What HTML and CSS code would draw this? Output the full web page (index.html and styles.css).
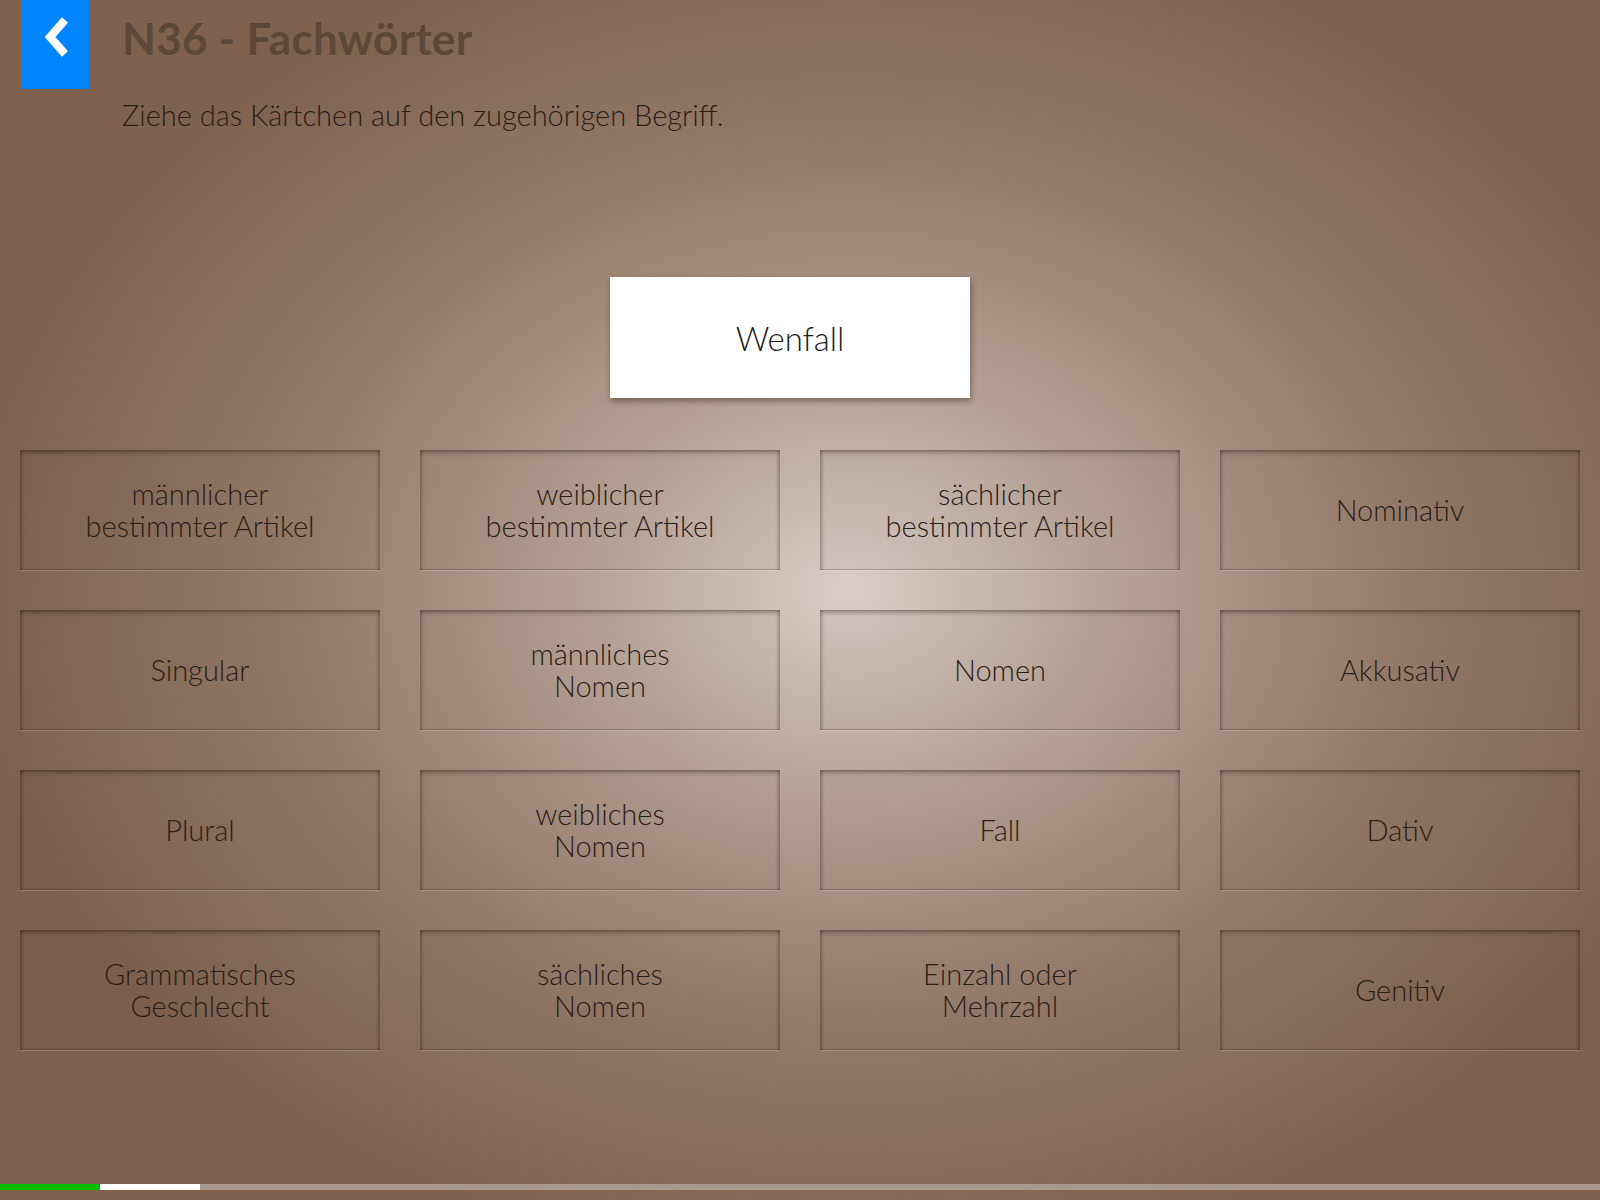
FILE: index.html
```html
<!DOCTYPE html>
<html lang="de">
<head>
    <meta charset="UTF-8" />
    <meta name="viewport" content="width=device-width, initial-scale=1.0" />
    <title>N36 - Fachwörter</title>
    <link rel="stylesheet" href="styles.css">
</head>
<body>
    <div class="header">
        <a class="back-btn" href="#">
            <svg width="30" height="44" viewBox="0 0 30 44">
                <path d="M25 5 L10 22 L25 39" fill="none" stroke="#fff" stroke-width="8" stroke-linecap="butt" stroke-linejoin="miter" />
            </svg>
        </a>
        <div class="header-text">
            <h1>N36 - Fachwörter</h1>
            <p>Ziehe das Kärtchen auf den zugehörigen Begriff.</p>
        </div>
    </div>

    <div class="stage">
        <div class="drag-card">Wenfall</div>
    </div>

    <div class="slots">
        <div class="slot">männlicher<br>bestimmter Artikel</div>
        <div class="slot">weiblicher<br>bestimmter Artikel</div>
        <div class="slot">sächlicher<br>bestimmter Artikel</div>
        <div class="slot">Nominativ</div>

        <div class="slot">Singular</div>
        <div class="slot">männliches<br>Nomen</div>
        <div class="slot">Nomen</div>
        <div class="slot">Akkusativ</div>

        <div class="slot">Plural</div>
        <div class="slot">weibliches<br>Nomen</div>
        <div class="slot">Fall</div>
        <div class="slot">Dativ</div>

        <div class="slot">Grammatisches<br>Geschlecht</div>
        <div class="slot">sächliches<br>Nomen</div>
        <div class="slot">Einzahl oder<br>Mehrzahl</div>
        <div class="slot">Genitiv</div>
    </div>

    <div class="progress">
        <span class="step done"></span>
        <span class="step current"></span>
    </div>
</body>
</html>
```

FILE: styles.css
```css
* {
    margin: 0;
    padding: 0;
    box-sizing: border-box;
}

html, body {
    height: 100%;
}

body {
    font-family: Lato, 'Open Sans', sans-serif;
    font-weight: 300;
    color: #2a1f18;
    background-color: #7f614d;
    background-image: radial-gradient(ellipse 880px 680px at 850px 590px, #d8cdc8 0%, #b5a396 30%, #967c6b 62%, #7f614d 100%);
    display: flex;
    flex-direction: column;
    overflow: hidden;
}

.header {
    display: flex;
    align-items: flex-start;
    padding-left: 21px;
}

.back-btn {
    width: 68px;
    height: 89px;
    background: #0084ff;
    display: flex;
    justify-content: center;
    padding-top: 15px;
}

.header-text {
    margin-left: 33px;
}

.header h1 {
    font-size: 44px;
    font-weight: 700;
    color: #5d4738;
    line-height: 1;
    margin-top: 16px;
    letter-spacing: 0.3px;
}

.header p {
    font-size: 29px;
    line-height: 1;
    margin-top: 40px;
    color: #2a1f18;
}

.stage {
    display: flex;
    justify-content: center;
    padding-right: 20px;
    margin-top: 148px;
}

.drag-card {
    width: 360px;
    height: 121px;
    background: #fff;
    display: flex;
    align-items: center;
    justify-content: center;
    font-size: 33px;
    color: #1c1c1c;
    box-shadow: 1px 3px 6px rgba(40, 25, 15, 0.45);
}

.slots {
    display: grid;
    grid-template-columns: repeat(4, 360px);
    grid-auto-rows: 120px;
    column-gap: 40px;
    row-gap: 40px;
    margin: 52px 0 0 20px;
}

.slot {
    display: flex;
    align-items: center;
    justify-content: center;
    text-align: center;
    font-size: 29px;
    line-height: 32px;
    color: #2b2018;
    background: rgba(60, 40, 25, 0.03);
    box-shadow:
        inset 0 4px 5px -2px rgba(30, 18, 10, 0.45),
        inset 4px 0 4px -3px rgba(30, 18, 10, 0.35),
        inset -4px 0 4px -3px rgba(30, 18, 10, 0.35),
        inset 0 -1px 0 rgba(40, 25, 15, 0.2),
        0 1px 0 rgba(255, 255, 255, 0.18);
}

.progress {
    margin-top: auto;
    margin-bottom: 10px;
    height: 6px;
    display: flex;
    background: #a99a90;
}

.step {
    width: 100px;
    height: 100%;
}

.step.done {
    background: #00c000;
}

.step.current {
    background: #fff;
}
```
